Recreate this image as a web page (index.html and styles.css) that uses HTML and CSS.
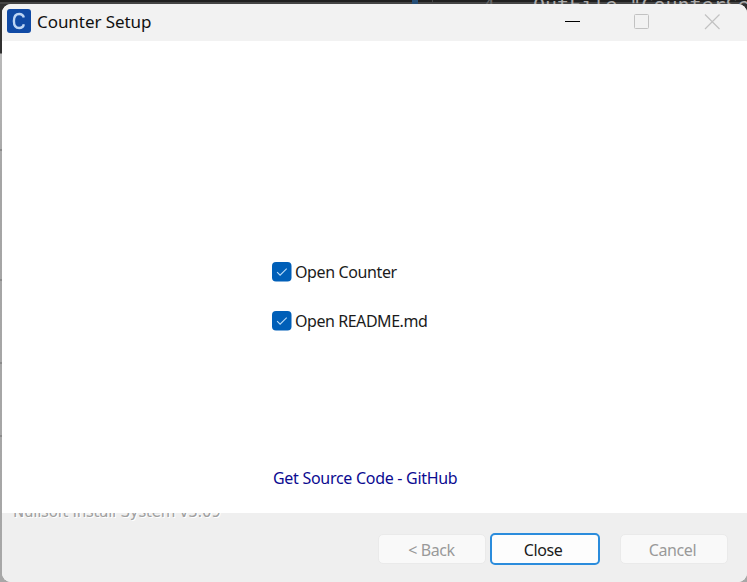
FILE: index.html
```
<!DOCTYPE html>
<html lang="en">
<head>
<meta charset="utf-8">
<title>Counter Setup</title>
<link rel="stylesheet" href="styles.css">
</head>
<body>
<div class="desktop">
  <div class="editor" aria-hidden="true"><i class="editor-mark"></i><i class="editor-guide"></i><span class="line-number">4</span><span class="code">OutFile "CounterSetup"</span></div>
  <main class="window">
    <header class="titlebar">
      <svg class="app-icon" viewBox="0 0 24 24"><rect width="24" height="24" rx="3" fill="#104aa5"/><path d="M16.8 8.6C16.3 6.3 14.6 5 12.2 5C8.8 5 6.9 7.4 6.9 12C6.9 16.6 8.8 19 12.2 19C14.7 19 16.4 17.6 16.8 15.3" fill="none" stroke="#bdd5f4" stroke-width="2.4"/></svg>
      <h1 class="title">Counter Setup</h1>
      <svg class="controls" viewBox="0 0 160 20" fill="none"><path d="M1 10.5H16" stroke="#000"/><rect x="70.5" y="3.5" width="14" height="14" rx="1" stroke="#c2c2c2"/><path d="M141 3.5L155.5 18M155.5 3.5L141 18" stroke="#c2c2c2" stroke-width="1.2"/></svg>
    </header>
    <section class="content">
      <label class="option"><svg class="check" viewBox="0 0 20 20"><rect width="19.5" height="19.5" rx="4" fill="#005fb8"/><path d="M5.1 10.2L8.1 13.2L14.7 6.7" fill="none" stroke="#b9dcf8" stroke-width="1.1"/></svg><span class="option-one">Open Counter</span></label>
      <label class="option"><svg class="check" viewBox="0 0 20 20"><rect width="19.5" height="19.5" rx="4" fill="#005fb8"/><path d="M5.1 10.2L8.1 13.2L14.7 6.7" fill="none" stroke="#b9dcf8" stroke-width="1.1"/></svg><span class="option-two">Open README.md</span></label>
      <a class="source">Get Source Code - GitHub</a>
    </section>
    <footer class="footer">
      <div class="branding"><span>Nullsoft Install System v3.09</span></div>
      <div class="actions">
        <button class="button back" disabled>&lt; Back</button>
        <button class="button close">Close</button>
        <button class="button cancel" disabled>Cancel</button>
      </div>
    </footer>
  </main>
</div>
</body>
</html>
```
FILE: styles.css
```
* { box-sizing: border-box; }
body { margin: 0; font-family: "Noto Sans", sans-serif; }
.desktop {
  position: relative;
  width: 747px;
  height: 582px;
  padding: 4px 0 0 2px;
  overflow: hidden;
  background:
    linear-gradient(#8b8b8b, #8b8b8b) 0 149px / 2px 2px no-repeat,
    linear-gradient(#8b8b8b, #8b8b8b) 0 279px / 2px 2px no-repeat,
    linear-gradient(#8b8b8b, #8b8b8b) 0 362px / 2px 2px no-repeat,
    linear-gradient(#8b8b8b, #8b8b8b) 0 435px / 2px 2px no-repeat,
    linear-gradient(#303030 0 53px, #b9b9b9 54px, #a5a5a5 180px, #a7a7a7 100%);
}
.editor {
  position: absolute;
  inset: 0 0 auto;
  height: 4px;
  overflow: hidden;
  background: linear-gradient(#202020 0 2px, #454545 2px 4px);
  color: #aaa;
  font: 20px/18px "DejaVu Sans Mono", monospace;
}
.editor span { position: absolute; top: -4px; white-space: pre; }
.editor .line-number { left: 483px; color: #666; }
.editor .code { left: 533px; }
.editor-mark { position: absolute; left: 412px; width: 6px; height: 4px; background: #264f78; }
.editor-guide { position: absolute; left: 432px; width: 1px; height: 4px; background: #444; }
.window {
  position: relative;
  height: 578px;
  display: flex;
  flex-direction: column;
  overflow: hidden;
  border-radius: 9px;
  background: #fff;
}
.titlebar { display: flex; height: 37px; padding: 5px 23px 0 5px; background: #f2f2f2; }
.app-icon { width: 24px; height: 24px; }
.title { margin: 0 0 0 6px; color: #111; font-size: 17px; font-weight: 400; line-height: 25px; letter-spacing: -.06px; white-space: nowrap; }
.controls { width: 160px; height: 20px; margin: 2px 0 0 auto; }
.content { height: 472px; padding: 220px 0 0 270px; color: #1b1b1b; font-size: 16px; }
.option { display: flex; align-items: center; width: max-content; height: 22px; margin-bottom: 27.4px; white-space: nowrap; }
.check { width: 20px; height: 20px; margin-right: 3px; }
.option-one { letter-spacing: -.38px; }
.option-two { letter-spacing: -.45px; }
.source { display: block; width: max-content; margin: 134.2px 0 0 1px; color: #0b0b91; line-height: 22px; letter-spacing: -.29px; white-space: nowrap; }
.footer { flex: 1; background: #efefef; }
.branding { height: 11px; margin-left: 11px; overflow: hidden; color: #a0a0a0; text-shadow: 1px 1px #fff; font: 15px/20px "DejaVu Sans", sans-serif; letter-spacing: -.24px; white-space: nowrap; }
.branding span { display: block; margin-top: -11px; }
.actions { display: flex; justify-content: flex-end; align-items: center; height: 34px; margin-top: 8px; padding-right: 19px; }
.button { width: 108px; height: 30px; padding: 2px 0 0; border: 1px solid #eaeaea; border-radius: 5px; background: #f9f9f9; color: #999; font: 16px/26px "Noto Sans", sans-serif; letter-spacing: -.4px; }
.back { margin-right: 4px; padding-right: 1px; }
.close { width: 110px; height: 32px; margin-right: 20px; border: 2px solid #2b8cdc; background: #fdfdfd; color: #1a1a1a; padding-right: 4px; }
.cancel { padding-right: 3px; }
```
